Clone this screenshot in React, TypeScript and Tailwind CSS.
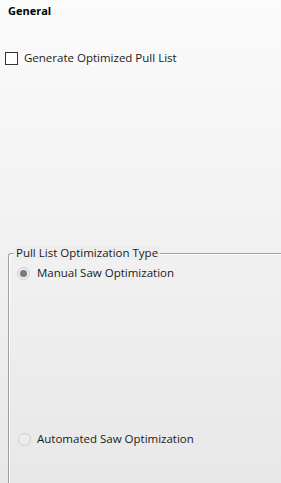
import React from 'react';

function Radio({ checked }: { checked?: boolean }) {
  return (
    <span className="flex h-[13px] w-[13px] shrink-0 items-center justify-center rounded-full border border-[#cfcfcf] bg-[#ececec]">
      {checked && <span className="h-[7px] w-[7px] rounded-full bg-[#7a7a7a]" />}
    </span>
  );
}

export default function App() {
  return (
    <div className="h-[483px] w-[281px] overflow-hidden bg-gradient-to-b from-[#fbfbfb] to-[#e8e8e8] font-['Segoe_UI','Open_Sans',sans-serif] text-[11.5px] leading-[16px] text-[#1a1a1a]">
      <div className="pl-[8px] pt-[3px] text-[11px] font-bold leading-[15px] text-black">General</div>

      <label className="mt-[32px] flex items-center gap-[6px] pl-[5px]">
        <span className="h-[13px] w-[13px] shrink-0 border border-[#333333] bg-white" />
        <span>Generate Optimized Pull List</span>
      </label>

      <fieldset className="ml-[8px] mt-[180px] h-[300px] rounded-tl-[3px] border-l border-t border-[#a0a0a0] p-0 shadow-[inset_1px_1px_0_#ffffff]">
        <legend className="ml-[5px] bg-[#eeeeee] px-[2px] leading-[14px]">Pull List Optimization Type</legend>
        <div className="mt-[5px] flex items-center gap-[7px] pl-[8px]">
          <Radio checked />
          <span>Manual Saw Optimization</span>
        </div>
        <div className="mt-[150px] flex items-center gap-[6px] pl-[9px]">
          <Radio />
          <span>Automated Saw Optimization</span>
        </div>
      </fieldset>
    </div>
  );
}
